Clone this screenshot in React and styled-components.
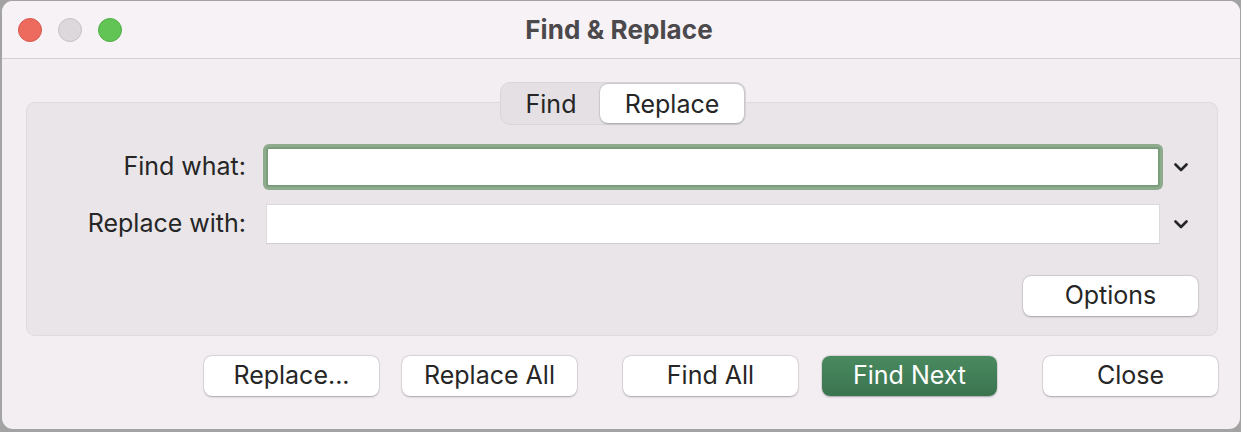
import React from "react";
import styled, { createGlobalStyle } from "styled-components";

const GlobalStyle = createGlobalStyle`
  html, body { margin: 0; padding: 0; }
  body {
    background: #a3a3a3;
    font-family: Inter, "Liberation Sans", sans-serif;
    -webkit-font-smoothing: antialiased;
  }
`;

const Window = styled.div`
  box-sizing: border-box;
  margin: 1px 1px 3px 2px;
  width: 1238px;
  height: 428px;
  border-radius: 11px;
  background: #f2eef2;
  overflow: hidden;
  display: flex;
  flex-direction: column;
`;

const TitleBar = styled.div`
  box-sizing: border-box;
  height: 58px;
  flex: none;
  background: #f7f2f6;
  border-bottom: 1px solid #d3cfd3;
  display: grid;
  grid-template-columns: 1fr auto 1fr;
  align-items: center;
  padding: 0 16px;
`;

const Lights = styled.div`
  display: flex;
  gap: 16px;
  align-items: center;
`;

const Light = styled.span`
  width: 24px;
  height: 24px;
  border-radius: 50%;
  box-sizing: border-box;
  background: ${(p) => p.$color};
  border: 1px solid ${(p) => p.$edge};
`;

const Title = styled.div`
  font-size: 26px;
  font-weight: 700;
  color: #4c494c;
  letter-spacing: 0.1px;
  padding-right: 4px;
`;

const Body = styled.div`
  flex: 1;
  display: flex;
  flex-direction: column;
  padding: 23px 22px 0 24px;
`;

const Tabs = styled.div`
  align-self: center;
  display: flex;
  height: 43px;
  box-sizing: border-box;
  padding: 1px;
  border-radius: 10px;
  background: #e4e0e4;
  border: 1px solid #d9d5d9;
  margin-bottom: -23px;
  margin-left: 2px;
  position: relative;
  z-index: 1;
`;

const Tab = styled.div`
  display: flex;
  align-items: center;
  justify-content: center;
  width: ${(p) => p.$w}px;
  font-size: 25px;
  color: #262626;
  border-radius: 8px;
  background: ${(p) => (p.$active ? "#ffffff" : "transparent")};
  box-shadow: ${(p) =>
    p.$active ? "0 0.5px 2px rgba(0,0,0,0.25), 0 0 0 0.5px rgba(0,0,0,0.08)" : "none"};
`;

const Group = styled.div`
  box-sizing: border-box;
  height: 234px;
  border-radius: 9px;
  background: #e9e5e9;
  border: 1px solid #dedade;
  padding: 44px 19px 19px 20px;
  display: flex;
  flex-direction: column;
`;

const Form = styled.div`
  display: grid;
  grid-template-columns: 219px 1fr 38px;
  row-gap: 17px;
  align-items: center;
`;

const Label = styled.label`
  text-align: right;
  padding-right: 20px;
  font-size: 25px;
  color: #262626;
  padding-bottom: 2px;
`;

const Field = styled.div`
  box-sizing: border-box;
  height: 40px;
  background: #fff;
  border: ${(p) => (p.$focus ? "2px solid #7c9d7c" : "1px solid #dcd8dc")};
  border-bottom-color: ${(p) => (p.$focus ? "#7c9d7c" : "#cfcbcf")};
  border-radius: ${(p) => (p.$focus ? "3px" : "1px")};
  box-shadow: ${(p) => (p.$focus ? "0 0 0 3px #8eab8e" : "none")};
`;

const Chevron = styled.svg`
  width: 14px;
  height: 9px;
  justify-self: center;
  margin-left: 4px;
`;

const OptionsRow = styled.div`
  display: flex;
  justify-content: flex-end;
  margin-top: 32px;
`;

const Button = styled.button`
  box-sizing: border-box;
  width: 175px;
  height: 40px;
  border: none;
  border-radius: 8px;
  font-family: inherit;
  font-size: 25px;
  padding: 0 0 2px;
  color: ${(p) => (p.$primary ? "#ffffff" : "#262626")};
  background: ${(p) =>
    p.$primary ? "linear-gradient(#4a8a60, #3a744f)" : "#ffffff"};
  box-shadow: 0 0.5px 2px rgba(0, 0, 0, 0.28), 0 0 0 0.5px rgba(0, 0, 0, 0.08);
`;

const Footer = styled.div`
  display: flex;
  justify-content: flex-end;
  gap: 46px;
  margin-top: 20px;
`;

const ButtonGroup = styled.div`
  display: flex;
  gap: ${(p) => p.$gap}px;
`;

const ChevronIcon = () => (
  <Chevron viewBox="0 0 14 9">
    <path d="M1.5 1.5 L7 7 L12.5 1.5" fill="none" stroke="#262626" strokeWidth="2.6" strokeLinecap="round" strokeLinejoin="round" />
  </Chevron>
);

export default function App() {
  return (
    <>
      <GlobalStyle />
      <Window>
        <TitleBar>
          <Lights>
            <Light $color="#ed6a5e" $edge="#d55a4f" />
            <Light $color="#dcd8dc" $edge="#c6c2c6" />
            <Light $color="#61c454" $edge="#52ad46" />
          </Lights>
          <Title>Find &amp; Replace</Title>
          <div />
        </TitleBar>
        <Body>
          <Tabs>
            <Tab $w={98}>Find</Tab>
            <Tab $w={144} $active>Replace</Tab>
          </Tabs>
          <Group>
            <Form>
              <Label>Find what:</Label>
              <Field $focus />
              <ChevronIcon />
              <Label>Replace with:</Label>
              <Field />
              <ChevronIcon />
            </Form>
            <OptionsRow>
              <Button>Options</Button>
            </OptionsRow>
          </Group>
          <Footer>
            <ButtonGroup $gap={23}>
              <Button>Replace...</Button>
              <Button>Replace All</Button>
            </ButtonGroup>
            <ButtonGroup $gap={24}>
              <Button>Find All</Button>
              <Button $primary>Find Next</Button>
            </ButtonGroup>
            <Button>Close</Button>
          </Footer>
        </Body>
      </Window>
    </>
  );
}
